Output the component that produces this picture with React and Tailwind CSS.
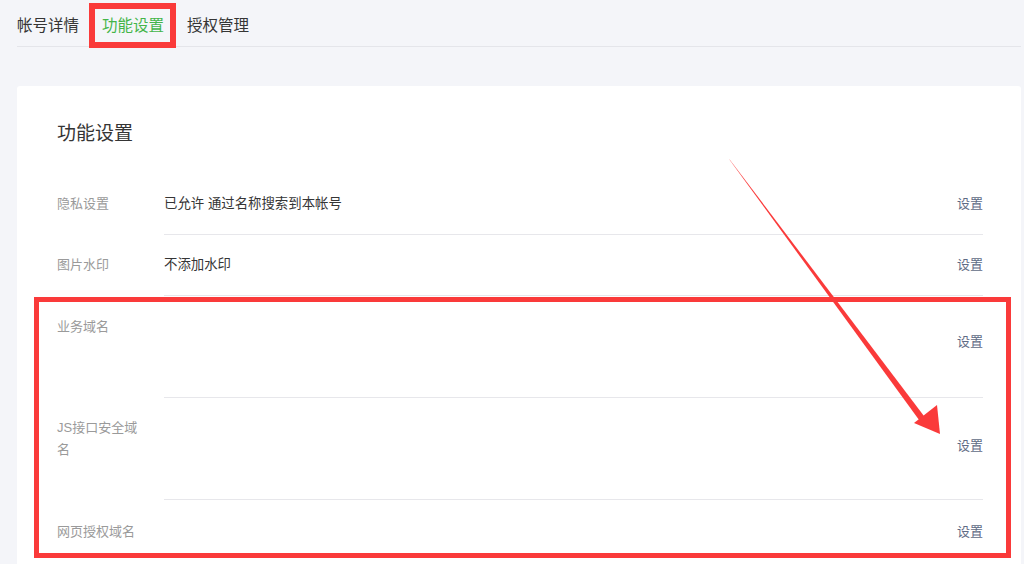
import React from "react";

const rows = [
  { label: "隐私设置", value: "已允许 通过名称搜索到本帐号", kind: "short" },
  { label: "图片水印", value: "不添加水印", kind: "short" },
  { label: "业务域名", value: "", kind: "tall", actionTop: "pt-[36px]", labelTop: "pt-[20px]" },
  { label: "JS接口安全域名", value: "", kind: "tall", actionTop: "pt-[38px]", labelTop: "pt-[19px]" },
  { label: "网页授权域名", value: "", kind: "last" },
];

const Row = ({ row }) => {
  if (row.kind === "short") {
    return (
      <div className="flex text-[13px] leading-[20px]">
        <div className="w-[107px] shrink-0 py-[20px] text-[#9a9a9a]">{row.label}</div>
        <div className="flex flex-1 justify-between border-b border-[#e7e7eb] py-[20px]">
          <span className="text-[13.4px] text-[#353535]">{row.value}</span>
          <span className="text-[#5f6b85]">设置</span>
        </div>
      </div>
    );
  }
  if (row.kind === "tall") {
    return (
      <div className="flex text-[13px]">
        <div className={`w-[107px] shrink-0 leading-[22px] text-[#9a9a9a] ${row.labelTop}`}>
          <div className="w-[88px]">{row.label}</div>
        </div>
        <div className="flex h-[102px] flex-1 justify-end border-b border-[#e7e7eb] leading-[20px]">
          <span className={`text-[#5f6b85] ${row.actionTop}`}>设置</span>
        </div>
      </div>
    );
  }
  return (
    <div className="flex text-[13px] leading-[22px]">
      <div className="w-[107px] shrink-0 pt-[21px] pb-[20px] text-[#9a9a9a]">{row.label}</div>
      <div className="flex flex-1 justify-end pt-[21px]">
        <span className="text-[#5f6b85]">设置</span>
      </div>
    </div>
  );
};

export default function App() {
  return (
    <div
      className="relative h-[564px] w-[1024px] overflow-hidden bg-[#f4f5f9]"
      style={{ fontFamily: '"Liberation Sans", "Noto Sans CJK SC", sans-serif' }}
    >
      {/* tabs */}
      <div className="ml-[17px] mr-[3px] flex gap-[23px] border-b border-[#e4e5ea] pt-[16px] pb-[10px] text-[15.5px] leading-[20px]">
        <span className="text-[#353535]">帐号详情</span>
        <span className="text-[#44b549]">功能设置</span>
        <span className="text-[#353535]">授权管理</span>
      </div>

      {/* card */}
      <div className="ml-[17px] mr-[3px] mt-[39px] rounded-[3px] bg-white pl-[40px] pr-[38px] pb-[40px]">
        <div className="pt-[34px] pb-[27px] text-[19px] leading-[27px] text-[#353535]">功能设置</div>
        {rows.map((row) => (
          <Row key={row.label} row={row} />
        ))}
      </div>

      {/* annotations */}
      <div className="pointer-events-none absolute left-[89px] top-[3px] h-[45px] w-[87px] border-[6px] border-[#fa3a3a]" />
      <div className="pointer-events-none absolute left-[34px] top-[297px] h-[261px] w-[977px] border-[5px] border-[#fa3a3a]" />
      <svg className="pointer-events-none absolute left-0 top-0" width="1024" height="564">
        <polygon points="729,159 730,160 927,420 922,424" fill="#fa3a3a" />
        <polygon points="940,434 914,423 937,405" fill="#fa3a3a" />
      </svg>
    </div>
  );
}
